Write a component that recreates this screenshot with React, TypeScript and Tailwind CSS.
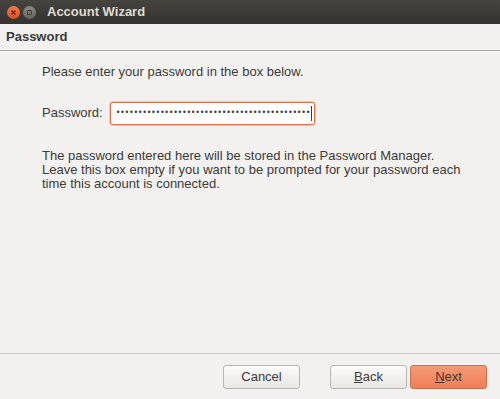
import React from 'react';

const font = { fontFamily: '"Liberation Sans", "DejaVu Sans", sans-serif' };

const Btn: React.FC<{ label: React.ReactNode; primary?: boolean; className?: string }> = ({ label, primary, className }) => (
  <button
    className={
      'h-[24px] w-[77px] rounded-[3px] border text-[13px] ' +
      (primary
        ? 'border-[#c9714d] bg-gradient-to-b from-[#f59a75] to-[#ef7f57] text-[#3c3b37] '
        : 'border-[#b8b6b1] bg-gradient-to-b from-[#fbfbfa] to-[#e8e7e4] text-[#3c3b37] ') +
      (className ?? '')
    }
  >
    {label}
  </button>
);

export default function App() {
  const dots = '•'.repeat(44);
  return (
    <div className="flex h-[399px] w-[500px] flex-col bg-[#f2f1f0] text-[#3c3b37]" style={font}>
      {/* title bar */}
      <div className="flex h-[24px] items-center bg-gradient-to-b from-[#45443f] to-[#343330] pl-[7px]">
        <div className="flex h-[13px] w-[13px] items-center justify-center rounded-full bg-gradient-to-b from-[#f47a4d] to-[#df4d1c]">
          <svg width="7" height="7" viewBox="0 0 7 7">
            <path d="M1.5 1.5L5.5 5.5M5.5 1.5L1.5 5.5" stroke="#6b2a12" strokeWidth="1.4" />
          </svg>
        </div>
        <div className="ml-[3px] flex h-[13px] w-[13px] items-center justify-center rounded-full bg-gradient-to-b from-[#8a8985] to-[#65645f]">
          <div className="h-[5px] w-[5px] rounded-[1px] border border-[#3e3d39]" />
        </div>
        <span className="ml-[11px] text-[13px] font-bold text-[#dfdbd2]">Account Wizard</span>
      </div>
      {/* header */}
      <div className="flex h-[27px] items-center border-b border-[#a9a7a3] pl-[6px] shadow-[0_1px_0_#ffffff]">
        <span className="text-[13px] font-bold text-[#3c3b37]">Password</span>
      </div>
      {/* body */}
      <div className="flex flex-1 flex-col pl-[42px] text-[13px]">
        <p className="mt-[11px]">Please enter your password in the box below.</p>
        <div className="mt-[20px] flex items-center">
          <span>Password:</span>
          <div className="ml-[7px] flex h-[23px] w-[205px] items-center rounded-[3px] border border-[#e0734a] bg-white pl-[5px] shadow-[0_0_0_1px_#f4c2ae]">
            <span className="text-[8px] leading-none tracking-[-0.3px] text-[#3c3b37]" style={{ fontFamily: '"DejaVu Sans", sans-serif' }}>
              {dots}
            </span>
            <span className="ml-[1px] h-[15px] w-[1px] bg-[#3c3b37]" />
          </div>
        </div>
        <p className="mt-[24px] leading-[14px]">
          The password entered here will be stored in the Password Manager.
          <br />
          Leave this box empty if you want to be prompted for your password each
          <br />
          time this account is connected.
        </p>
      </div>
      {/* footer */}
      <div className="flex h-[46px] items-center justify-end border-t border-[#c9c7c3] pr-[13px]">
        <Btn label="Cancel" />
        <Btn label={<><u>B</u>ack</>} className="ml-[30px]" />
        <Btn label={<><u>N</u>ext</>} primary className="ml-[3px]" />
      </div>
    </div>
  );
}
